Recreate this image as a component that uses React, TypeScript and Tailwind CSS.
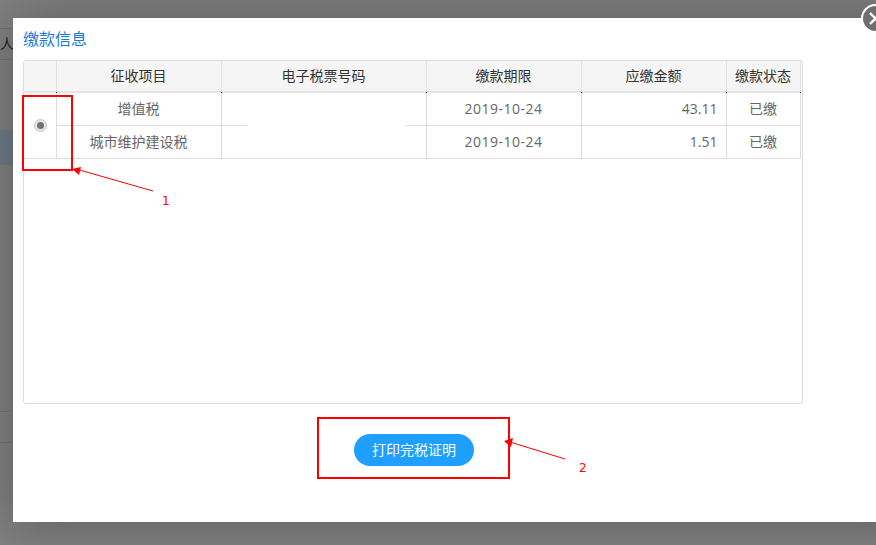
const font = { fontFamily: '"Open Sans", "Noto Sans CJK SC", sans-serif' };

const rows = [
  { name: "增值税", date: "2019-10-24", amount: "43.11", status: "已缴" },
  { name: "城市维护建设税", date: "2019-10-24", amount: "1.51", status: "已缴" },
];

const headers = [
  { label: "", w: "w-[32px]" },
  { label: "征收项目", w: "w-[165px]" },
  { label: "电子税票号码", w: "w-[205px]" },
  { label: "缴款期限", w: "w-[155px]" },
  { label: "应缴金额", w: "w-[145px]" },
  { label: "缴款状态", w: "w-[74px]" },
];

function BackgroundPage() {
  return (
    <div className="flex h-[545px] w-full flex-col bg-[#808080] text-[#222]">
      <div className="h-[29px] border-b border-[#747474]" />
      <div className="flex h-[31px] items-center border-b border-[#747474] text-sm">人</div>
      <div className="h-[70px]" />
      <div className="h-[35px] bg-[#6f7a85]" />
      <div className="h-[246px]" />
      <div className="h-[32px] border-y border-[#747474]" />
    </div>
  );
}

function PaymentTable() {
  return (
    <div className="h-[344px] w-[780px] rounded-[3px] border border-[#dcdcdc]">
      <table className="table-fixed border-collapse text-sm leading-[18px]">
        <thead>
          <tr className="h-[31px] bg-[#f5f5f5] text-[#333]">
            {headers.map((h, i) => (
              <th
                key={i}
                className={`${h.w} relative border-r border-b-2 border-r-[#e0e0e0] border-b-[#e4e4e4] p-0 pb-[1px] font-normal`}
              >
                {h.label}
                <span className="absolute right-[-1px] bottom-[-2px] h-px w-px bg-[#333]" />
              </th>
            ))}
          </tr>
        </thead>
        <tbody className="text-[#666]">
          {rows.map((row, i) => (
            <tr key={row.name} className="h-[33px]">
              {i === 0 && (
                <td rowSpan={2} className="border-r border-b border-[#dcdcdc] p-0">
                  <div className="flex items-center justify-center pl-[1px]">
                    <span className="flex h-[13px] w-[13px] items-center justify-center rounded-full border border-[#c4c4c4] bg-[#e6e6e6]">
                      <span className="h-[7px] w-[7px] rounded-full bg-[#737373]" />
                    </span>
                  </div>
                </td>
              )}
              <td className="border-r border-b border-[#dcdcdc] p-0 text-center">{row.name}</td>
              <td className="relative border-r border-b border-[#dcdcdc] p-0">
                {i === 0 && (
                  <span className="absolute right-[20px] bottom-[-1px] left-[25px] h-px bg-white" />
                )}
              </td>
              <td className="border-r border-b border-[#dcdcdc] p-0 text-center tracking-[0.5px]">{row.date}</td>
              <td className="border-r border-b border-[#dcdcdc] p-0 pr-[8px] text-right">{row.amount}</td>
              <td className="border-r border-b border-[#dcdcdc] p-0 text-center">{row.status}</td>
            </tr>
          ))}
        </tbody>
      </table>
    </div>
  );
}

function Annotations() {
  return (
    <>
      <div className="absolute top-[95px] left-[22px] h-[76px] w-[51px] border-2 border-[#ff0000]" />
      <div className="absolute top-[417px] left-[317px] h-[62px] w-[193px] border-2 border-[#ff0000]" />
      <svg className="absolute top-0 left-0" width="876" height="545">
        <path d="M153 191 L76 169" stroke="#ff0000" strokeWidth="1" fill="none" />
        <path d="M72 169 L81 167 L79 175 Z" fill="#ff0000" />
        <path d="M565 459 L510 442" stroke="#ff0000" strokeWidth="1" fill="none" />
        <path d="M504 441 L513 438 L511 447 Z" fill="#ff0000" />
      </svg>
      <span
        className="absolute top-[194px] left-[162px] text-xs leading-[15px] text-[#ff0000]"
        style={{ fontFamily: '"DejaVu Sans", sans-serif' }}
      >
        1
      </span>
      <span
        className="absolute top-[461px] left-[579px] text-xs leading-[15px] text-[#ff0000]"
        style={{ fontFamily: '"DejaVu Sans", sans-serif' }}
      >
        2
      </span>
    </>
  );
}

export default function App() {
  return (
    <div className="relative h-[545px] w-[876px] overflow-hidden" style={font}>
      <BackgroundPage />

      <div className="absolute top-[18px] left-[13px] flex h-[504px] w-[900px] flex-col bg-white pt-[10px] pl-[10px] shadow-[1px_1px_50px_rgba(0,0,0,0.3)]">
        <h2 className="h-[32px] text-base leading-[22px] font-normal text-[#1a7ad6]">缴款信息</h2>
        <PaymentTable />
        <div className="flex w-[782px] justify-center pt-[30px]">
          <button
            type="button"
            className="h-[32px] w-[120px] rounded-full bg-[#1f9fff] pb-[1px] text-sm text-white"
          >
            打印完税证明
          </button>
        </div>
      </div>

      <div className="absolute top-[4px] left-[861px] flex h-[29px] w-[29px] items-center justify-center rounded-full border-2 border-white bg-[#6f6f6f]">
        <svg width="15" height="15" viewBox="0 0 15 15">
          <path d="M2 2 L13 13 M13 2 L2 13" stroke="#ffffff" strokeWidth="2.4" />
        </svg>
      </div>

      <Annotations />
    </div>
  );
}
